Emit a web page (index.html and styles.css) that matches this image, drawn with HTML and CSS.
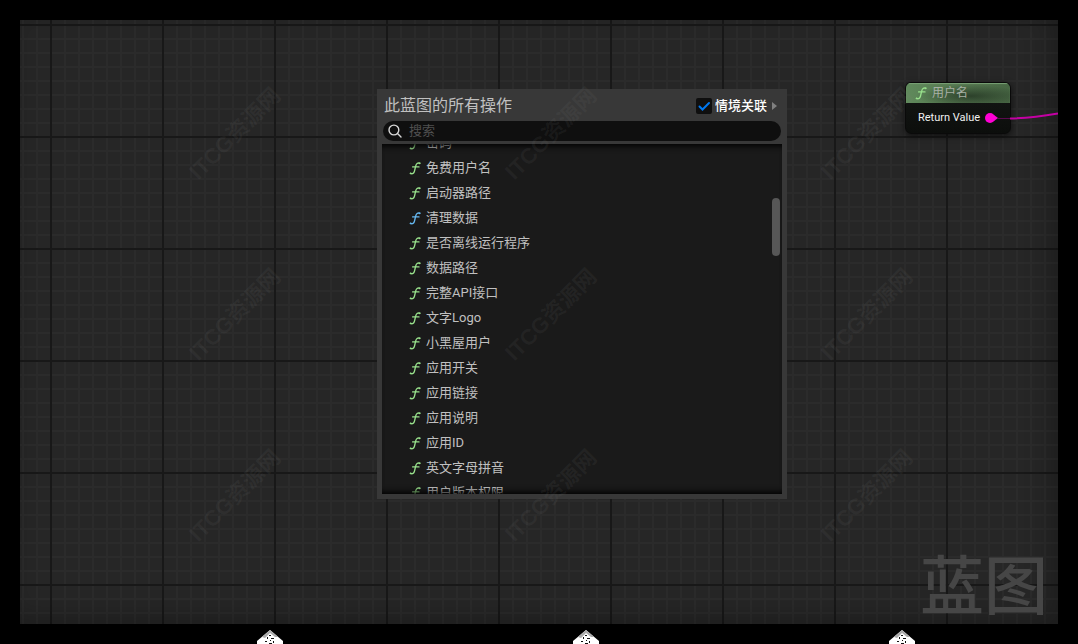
FILE: index.html
```html
<!DOCTYPE html>
<html lang="zh-CN">
  <head>
    <meta charset="UTF-8" />
    <title>蓝图</title>
    <link rel="stylesheet" href="styles.css">
  </head>
  <body>
    <svg class="defs" width="0" height="0" aria-hidden="true">
      <symbol id="icon-func" viewBox="0 0 12 14">
        <path d="M1.3 12.4C3.6 13.4 5 12.2 5.5 10L6.7 5C7.2 2.7 8.4 1.5 10.9 2.2M3.6 5.9H10" fill="none" stroke="currentColor" stroke-width="1.3" stroke-linecap="round" />
        <circle cx="1.7" cy="12.3" r=".9" fill="currentColor" />
        <circle cx="10.6" cy="2.3" r=".9" fill="currentColor" />
      </symbol>
      <symbol id="icon-marker" viewBox="0 0 26 14">
        <path d="M13 0L26 11V14H0V11Z" fill="#fff" />
        <path d="M13 0L21 7L18 7L13 3L8 8L5 7Z" fill="#aaa" />
        <path d="M12 5h2v1h-2zM10 7h1v2h-1zM14 8h3v1h-3zM8 11h2v1H8zM16 11h1v2h-1zM12 13h3v1h-3zM13 10h1v1h-1z" fill="#111" />
      </symbol>
    </svg>

    <main class="graph">
      <div class="graph-title">蓝图</div>

      <section class="node">
        <header class="node-head">
          <svg class="func"><use href="#icon-func" /></svg>
          <span>用户名</span>
        </header>
        <div class="node-pin">
          <span>Return Value</span>
          <svg width="14" height="10" viewBox="0 0 14 10">
            <circle cx="5" cy="5" r="5" fill="#ff00d4" />
            <path d="M9 2L13 5L9 8Z" fill="#ff00d4" />
          </svg>
        </div>
      </section>

      <svg class="wire" width="60" height="20" viewBox="0 0 60 20">
        <path d="M0 13.5H13" fill="none" stroke="#5c0a50" stroke-width="1" />
        <path d="M12 13.5C26 13.3 40 12 60 8.5" fill="none" stroke="#c400a4" stroke-width="2" />
      </svg>

      <section class="menu">
        <header class="menu-head">
          <h1>此蓝图的所有操作</h1>
          <input type="checkbox" id="context" checked />
          <label for="context">情境关联</label>
          <button class="expand" aria-label="展开"></button>
        </header>
        <div class="search">
          <svg width="14" height="14" viewBox="0 0 14 14">
            <path d="M9.8 9.8L13 13M10.8 6A4.9 4.9 0 1 1 1 6A4.9 4.9 0 0 1 10.8 6Z" fill="none" stroke="#d8d8d8" stroke-width="1.4" stroke-linecap="round" />
          </svg>
          <input type="text" placeholder="搜索" aria-label="搜索" />
        </div>
        <div class="list">
          <ul>
            <li><svg class="func"><use href="#icon-func" /></svg>密码</li>
            <li><svg class="func"><use href="#icon-func" /></svg>免费用户名</li>
            <li><svg class="func"><use href="#icon-func" /></svg>启动器路径</li>
            <li><svg class="func blue"><use href="#icon-func" /></svg>清理数据</li>
            <li><svg class="func"><use href="#icon-func" /></svg>是否离线运行程序</li>
            <li><svg class="func"><use href="#icon-func" /></svg>数据路径</li>
            <li><svg class="func"><use href="#icon-func" /></svg>完整API接口</li>
            <li><svg class="func"><use href="#icon-func" /></svg>文字Logo</li>
            <li><svg class="func"><use href="#icon-func" /></svg>小黑屋用户</li>
            <li><svg class="func"><use href="#icon-func" /></svg>应用开关</li>
            <li><svg class="func"><use href="#icon-func" /></svg>应用链接</li>
            <li><svg class="func"><use href="#icon-func" /></svg>应用说明</li>
            <li><svg class="func"><use href="#icon-func" /></svg>应用ID</li>
            <li><svg class="func"><use href="#icon-func" /></svg>英文字母拼音</li>
            <li><svg class="func"><use href="#icon-func" /></svg>用户版本权限</li>
          </ul>
          <div class="scroll-thumb"></div>
        </div>
      </section>

      <div class="watermarks" aria-hidden="true">
        <span>ITCG资源网</span><span>ITCG资源网</span><span>ITCG资源网</span>
        <span>ITCG资源网</span><span>ITCG资源网</span><span>ITCG资源网</span>
        <span>ITCG资源网</span><span>ITCG资源网</span><span>ITCG资源网</span>
      </div>
    </main>

    <footer class="markers">
      <svg><use href="#icon-marker" /></svg>
      <svg><use href="#icon-marker" /></svg>
      <svg><use href="#icon-marker" /></svg>
    </footer>
  </body>
</html>
```
FILE: styles.css
```css
* {
  box-sizing: border-box;
}
body {
  margin: 0;
  height: 100vh;
  padding: 20px 20px 0;
  display: flex;
  flex-direction: column;
  background: #000;
  color: #c0c0c0;
  font: 13px/20px Roboto, "Noto Sans CJK SC", sans-serif;
  overflow: hidden;
}
.defs {
  position: absolute;
}
.graph {
  position: relative;
  flex: 1;
  overflow: hidden;
  background-color: #262626;
  background-image:
    linear-gradient(90deg, #181818 2px, transparent 2px),
    linear-gradient(#181818 2px, transparent 2px),
    linear-gradient(90deg, #2b2b2b 2px, transparent 2px),
    linear-gradient(#2b2b2b 2px, transparent 2px);
  background-size: 112px 112px, 112px 112px, 14px 14px, 14px 14px;
  background-position: 30px 4px;
}
/* darkened edges of the graph */
.graph::before {
  content: "";
  position: absolute;
  inset: 0;
  box-shadow: inset -8px -8px 24px rgba(0, 0, 0, 0.25);
}
.graph-title {
  position: absolute;
  right: 10px;
  bottom: 0;
  font-size: 64px;
  line-height: 72px;
  font-weight: 500;
  color: #464646;
}
.func {
  width: 12px;
  height: 14px;
  flex: none;
  color: #98e08c;
}
.func.blue {
  color: #66b8f0;
}

/* node */
.node {
  position: absolute;
  left: 885px;
  top: 62px;
  width: 106px;
  border: 1px solid #0a0a0a;
  border-radius: 6px;
  background: linear-gradient(#151715, #0c0e0c);
  box-shadow: 0 2px 6px rgba(0, 0, 0, 0.6);
  overflow: hidden;
}
.node-head {
  display: flex;
  align-items: center;
  gap: 5px;
  height: 20px;
  padding-left: 9px;
  font-size: 12px;
  color: #a8b0a6;
  background: radial-gradient(ellipse at 62% 65%, rgba(20, 32, 20, 0.6), transparent 60%), linear-gradient(90deg, #608a5c, #54764f 50%, #486744);
  box-shadow: inset 0 1px 1px #7ba276;
}
.node-pin {
  display: flex;
  align-items: center;
  gap: 5px;
  height: 30px;
  padding-left: 12px;
  font-size: 11px;
  color: #f0f0f0;
  white-space: nowrap;
}
.node-pin svg {
  flex: none;
}
.wire {
  position: absolute;
  left: 978px;
  top: 85px;
}

/* action menu */
.menu {
  position: absolute;
  left: 357px;
  top: 69px;
  width: 410px;
  padding: 5px;
  background: #383838;
}
.menu-head {
  display: flex;
  align-items: center;
  height: 24px;
  padding: 0 5px 0 2px;
}
.menu-head h1 {
  margin: 0 auto 0 0;
  font-size: 16px;
  font-weight: 400;
  color: #c0c0c0;
}
.menu-head input {
  appearance: none;
  width: 16px;
  height: 16px;
  margin: 0 3px 0 0;
  border-radius: 2px;
  background: #0f0f0f url("data:image/svg+xml,%3Csvg xmlns='http://www.w3.org/2000/svg' viewBox='0 0 16 16'%3E%3Cpath d='M3.5 8.5L6.5 11.5L13 5' fill='none' stroke='%230078f0' stroke-width='2' stroke-linecap='round'/%3E%3C/svg%3E");
}
.menu-head label {
  color: #fff;
  font-weight: 500;
}
.expand {
  width: 5px;
  height: 8px;
  margin-left: 5px;
  padding: 0;
  border: 0;
  background: #808080;
  clip-path: polygon(0 0, 100% 50%, 0 100%);
}
.search {
  display: flex;
  align-items: center;
  height: 20px;
  margin: 3px 1px;
  padding: 0 5px;
  border-radius: 10px;
  background: #0f0f0f;
}
.search input {
  flex: 1;
  margin: 0 0 0 7px;
  padding: 0;
  border: 0;
  outline: 0;
  background: none;
  color: #c0c0c0;
  font: inherit;
}
.search input::placeholder {
  color: #505050;
}
.list {
  position: relative;
  height: 350px;
  overflow: hidden;
  background: #1a1a1a;
}
.list::after {
  content: "";
  position: absolute;
  inset: 0;
  box-shadow: inset 0 7px 6px -5px #000, inset 0 -7px 6px -5px #000;
}
/* scrolled a little past the first row */
.list ul {
  list-style: none;
  margin: -14px 0 0;
  padding: 0;
}
.list li {
  display: flex;
  align-items: center;
  gap: 5px;
  height: 25px;
  padding-left: 27px;
}
.scroll-thumb {
  position: absolute;
  right: 2px;
  top: 54px;
  width: 8px;
  height: 58px;
  border-radius: 4px;
  background: #575757;
}

/* watermark overlay */
.watermarks {
  position: absolute;
  left: 57px;
  top: 23px;
  display: grid;
  grid-template-columns: repeat(3, 316px);
  grid-auto-rows: 181px;
  place-items: center;
  pointer-events: none;
}
.watermarks span {
  font-family: "Liberation Sans", "Noto Sans CJK SC", sans-serif;
  font-size: 22px;
  font-weight: 700;
  white-space: nowrap;
  color: rgba(130, 130, 130, 0.1);
  transform: rotate(-45deg);
}
.markers {
  display: flex;
  gap: 290px;
  height: 20px;
  padding: 6px 0 0 237px;
}
.markers svg {
  flex: none;
  width: 26px;
  height: 14px;
}
```
